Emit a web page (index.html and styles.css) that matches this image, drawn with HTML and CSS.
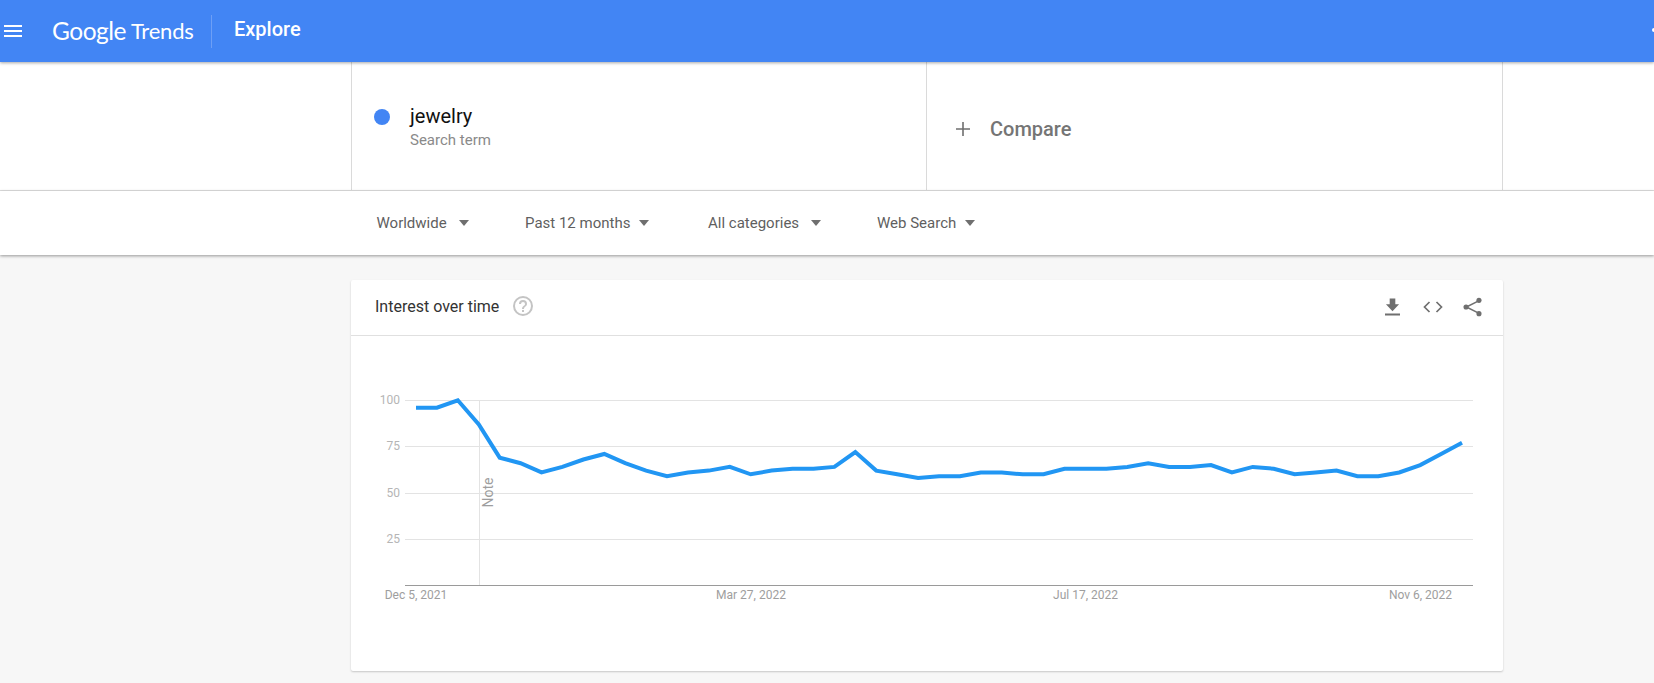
FILE: index.html
```html
<!DOCTYPE html>
<html lang="en">
<head>
<meta charset="utf-8">
<title>Explore - Google Trends</title>
<link rel="stylesheet" href="styles.css">
</head>
<body>
<header class="topbar">
  <button class="menu" aria-label="Menu"><span></span><span></span><span></span></button>
  <div class="logo"><span class="logo-google">Google</span><span class="logo-trends">Trends</span></div>
  <div class="page-title">Explore</div>
  <div class="edge-mark"></div>
</header>
<section class="terms">
  <div class="term">
    <span class="dot"></span>
    <div class="term-text">
      <div class="term-name">jewelry</div>
      <div class="term-type">Search term</div>
    </div>
  </div>
  <div class="compare">
    <svg class="plus" viewBox="0 0 16 16" aria-hidden="true"><path d="M7.2 1h1.6v6.2H15v1.6H8.8V15H7.2V8.8H1V7.2h6.2z"/></svg>
    <span>Compare</span>
  </div>
</section>
<nav class="filters">
  <div class="filter f1">Worldwide<i class="caret"></i></div>
  <div class="filter f2">Past 12 months<i class="caret"></i></div>
  <div class="filter f3">All categories<i class="caret"></i></div>
  <div class="filter f4">Web Search<i class="caret"></i></div>
</nav>
<main class="content">
  <article class="card">
    <div class="card-head">
      <h2>Interest over time</h2>
      <svg class="help" viewBox="0 0 24 24" aria-hidden="true"><path d="M12 2a10 10 0 1 0 0 20 10 10 0 0 0 0-20zm0 18a8 8 0 1 1 0-16 8 8 0 0 1 0 16zm-1-4h2v2h-2zm1-10a4 4 0 0 0-4 4h2a2 2 0 1 1 4 0c0 2-3 1.75-3 5h2c0-2.25 3-2.5 3-5a4 4 0 0 0-4-4z"/></svg>
      <div class="actions">
        <svg class="act dl" viewBox="0 0 16 18" aria-hidden="true"><path d="M5 0h6v6h4l-7 7.5L1 6h4zM0 16h16v2H0z"/></svg>
        <svg class="act code" viewBox="0 0 20 12" aria-hidden="true"><path d="M6.5 1 1.5 6l5 5M13.5 1l5 5-5 5" fill="none" stroke="#6f6f6f" stroke-width="1.7"/></svg>
        <svg class="act share" viewBox="0 0 20 20" aria-hidden="true"><path d="M16.5 3.5 3.5 10l13 6.500" fill="none" stroke="#6f6f6f" stroke-width="1.600"/><circle cx="16.800" cy="3" r="2.700"/><circle cx="3.200" cy="10" r="2.700"/><circle cx="16.800" cy="17" r="2.700"/></svg>
      </div>
    </div>
    <svg class="chart" viewBox="351 336 1152 335" role="img" aria-label="Interest over time chart">
      <g class="grid">
        <line x1="405" x2="1473" y1="400.500" y2="400.500"/>
        <line x1="405" x2="1473" y1="446.500" y2="446.500"/>
        <line x1="405" x2="1473" y1="493.500" y2="493.500"/>
        <line x1="405" x2="1473" y1="539.500" y2="539.500"/>
        <line x1="479.500" x2="479.500" y1="400" y2="585"/>
      </g>
      <line class="axis" x1="405" x2="1473" y1="585.500" y2="585.500"/>
      <g class="ylabels">
        <text x="400" y="404">100</text>
        <text x="400" y="450">75</text>
        <text x="400" y="497">50</text>
        <text x="400" y="543">25</text>
      </g>
      <g class="xlabels">
        <text x="416" y="598.500">Dec 5, 2021</text>
        <text x="751" y="598.500">Mar 27, 2022</text>
        <text x="1085.500" y="598.500">Jul 17, 2022</text>
        <text x="1420.500" y="598.500">Nov 6, 2022</text>
      </g>
      <text class="note" transform="translate(493 507.500) rotate(-90)">Note</text>
      <polyline class="trend" points="416,407.700 436.900,407.700 457.800,400.300 478.800,424.350 499.700,457.650 520.600,463.200 541.500,472.450 562.400,466.900 583.400,459.500 604.300,453.950 625.200,463.200 646.100,470.600 667,476.150 688,472.450 708.900,470.600 729.800,466.900 750.700,474.300 771.600,470.600 792.600,468.750 813.500,468.750 834.400,466.900 855.300,452.100 876.200,470.600 897.200,474.300 918.100,478 939,476.150 959.900,476.150 980.800,472.450 1001.800,472.450 1022.700,474.300 1043.600,474.300 1064.500,468.750 1085.400,468.750 1106.400,468.750 1127.300,466.900 1148.200,463.200 1169.100,466.900 1190,466.900 1211,465.050 1231.900,472.450 1252.800,466.900 1273.700,468.750 1294.600,474.300 1315.600,472.450 1336.500,470.600 1357.400,476.150 1378.300,476.150 1399.200,472.450 1420.200,465.050 1441.100,453.950 1462,442.850"/>
    </svg>
  </article>
</main>
</body>
</html>
```
FILE: styles.css
```css
* { box-sizing: border-box; }
html, body { margin: 0; height: 100%; }
body {
  background: #f7f7f7;
  font-family: Roboto, "Liberation Sans", sans-serif;
  overflow: hidden;
}
.topbar {
  height: 62px;
  background: #4285f4;
  display: flex;
  align-items: center;
  color: #fff;
  position: relative;
  z-index: 3;
  box-shadow: 0 1px 3px rgba(0,0,0,.35);
}
.menu {
  width: 18px;
  height: 12px;
  margin-left: 4px;
  padding: 0;
  border: 0;
  background: none;
  display: flex;
  flex-direction: column;
  justify-content: space-between;
}
.menu span { display: block; height: 2px; background: #fff; }
.logo {
  margin-left: 30px;
  height: 33px;
  width: 160px;
  flex: none;
  border-right: 1px solid #6d9ff6;
  display: flex;
  align-items: center;
  white-space: nowrap;
  font-family: Lato, sans-serif;
  padding-bottom: 2px;
}
.logo-google { font-size: 24.500px; letter-spacing: -.5px; }
.logo-trends { font-size: 22px; margin-left: 5px; font-weight: 400; letter-spacing: -.2px; }
.page-title { margin-left: 22px; font-size: 20px; font-weight: 500; margin-top: -4px; }
.edge-mark {
  position: absolute; right: 0; top: 28px;
  width: 2px; height: 4px; background: #fff; border-radius: 2px 0 0 2px;
}
.terms {
  height: 129px;
  background: #fff;
  border-bottom: 1px solid #e0e0e0;
  padding-left: 351px;
  display: flex;
}
.term, .compare {
  width: 575px;
  border-left: 1px solid #dadada;
  display: flex;
  align-items: center;
}
.compare {
  border-right: 1px solid #dadada;
  width: 577px;
  padding: 5px 0 0 28px;
  color: #757575;
  font-size: 20px;
  font-weight: 500;
}
.plus { width: 16px; height: 16px; fill: #6f6f6f; margin-right: 19px; }
.term { padding: 2px 0 0 22px; }
.dot { width: 16px; height: 16px; border-radius: 50%; background: #4285f4; margin-right: 20px; margin-top: -20px; }
.term-name { font-size: 20px; line-height: 24px; color: #111; }
.term-type { font-size: 15px; line-height: 20px; color: #8a8a8a; margin-top: 2px; }
.filters {
  height: 64px;
  background: #fff;
  padding-left: 376.500px;
  display: flex;
  align-items: center;
  font-size: 15px;
  color: #5f5f5f;
  position: relative;
  z-index: 2;
  box-shadow: 0 1px 3px rgba(0,0,0,.4);
}
.filter { display: flex; align-items: center; white-space: nowrap; }
.caret {
  width: 0; height: 0;
  border-left: 5px solid transparent;
  border-right: 5px solid transparent;
  border-top: 6px solid #6f6f6f;
}
.f1 { width: 148.500px; } .f1 .caret { margin-left: 12px; }
.f2 { width: 183px; } .f2 .caret { margin-left: 9px; }
.f3 { width: 169px; } .f3 .caret { margin-left: 12px; }
.f4 .caret { margin-left: 9px; }
.content { padding: 25px 0 0 351px; }
.card {
  width: 1152px;
  height: 391px;
  background: #fff;
  border-radius: 2px;
  box-shadow: 0 1px 2px rgba(0,0,0,.2);
}
.card-head {
  height: 56px;
  border-bottom: 1px solid #e0e0e0;
  display: flex;
  align-items: center;
  padding: 0 21px 0 24px;
}
.card-head h2 { margin: 0 0 2px; font-size: 16px; font-weight: 400; color: #333; }
.help { width: 24px; height: 24px; fill: #c4c4c4; margin: 0 0 3px 12px; }
.actions { margin-left: auto; display: flex; align-items: center; margin-top: -2px; }
.act { fill: #6f6f6f; display: block; }
.dl { width: 15px; height: 18px; margin-right: 23px; }
.code { width: 20px; height: 12px; margin-right: 20px; }
.share { width: 19px; height: 20px; }
.chart { display: block; width: 1152px; height: 335px; }
.grid line { stroke: #e3e3e3; stroke-width: 1; }
.axis { stroke: #9a9a9a; stroke-width: 1; }
.ylabels text { font-size: 12px; fill: #b5b5b5; text-anchor: end; }
.xlabels text { font-size: 12px; fill: #9e9e9e; text-anchor: middle; }
.note { font-size: 14px; fill: #9e9e9e; }
.trend { fill: none; stroke: #2196f3; stroke-width: 4; stroke-linejoin: miter; }
```
